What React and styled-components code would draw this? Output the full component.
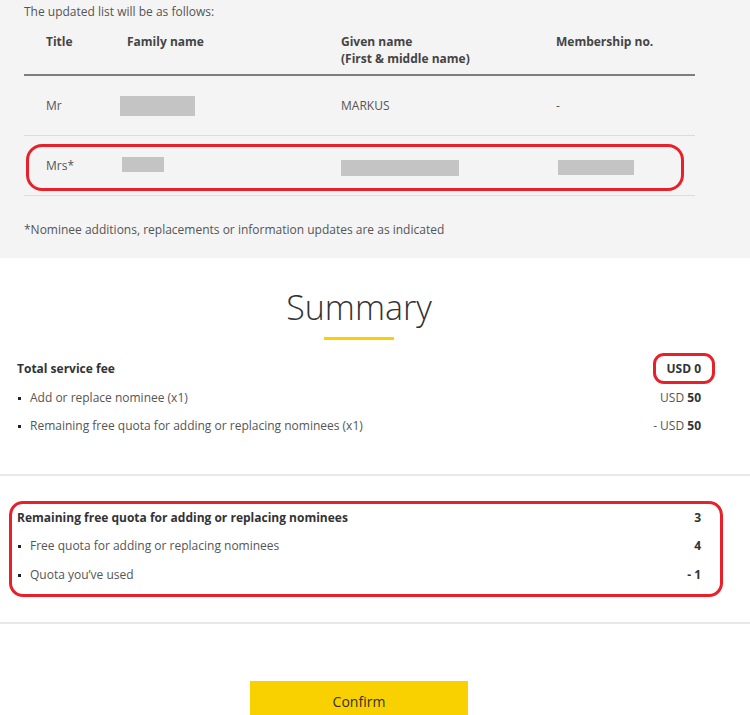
import React from "react";
import styled, { createGlobalStyle } from "styled-components";

const GlobalStyle = createGlobalStyle`
  * { box-sizing: border-box; }
  body {
    margin: 0;
    background: #fff;
    font-family: "Open Sans", "Liberation Sans", Arial, sans-serif;
    font-size: 12px;
    color: #555;
  }
`;

const nominees = [
  { title: "Mr", family: { w: 75, h: 20, dx: -7 }, given: "MARKUS", membership: "-" },
  {
    title: "Mrs*",
    family: { w: 42, h: 15, dx: -5, dy: -2 },
    given: { w: 118, h: 16, dx: 0, dy: 4 },
    membership: { w: 76, h: 15, dx: 2, dy: 3 },
    highlight: true,
  },
];

const Redacted = ({ box }) => (
  <Block style={{ width: box.w, height: box.h, marginLeft: box.dx || 0, marginTop: box.dy || 0 }} />
);

const Cell = ({ value }) => (
  <TableCell>{typeof value === "string" ? value : <Redacted box={value} />}</TableCell>
);

const App = () => {
  return (
    <>
      <GlobalStyle />
      <ListPanel>
        <Intro>The updated list will be as follows:</Intro>
        <Table>
          <HeaderRow>
            <HeaderCell>Title</HeaderCell>
            <HeaderCell>Family name</HeaderCell>
            <HeaderCell>
              Given name
              <br />
              (First &amp; middle name)
            </HeaderCell>
            <HeaderCell>Membership no.</HeaderCell>
          </HeaderRow>
          {nominees.map((n) => (
            <BodyRow key={n.title}>
              <TableCell>{n.title}</TableCell>
              <Cell value={n.family} />
              <Cell value={n.given} />
              <Cell value={n.membership} />
              {n.highlight && <RowMark />}
            </BodyRow>
          ))}
        </Table>
        <Footnote>*Nominee additions, replacements or information updates are as indicated</Footnote>
      </ListPanel>

      <Section>
        <Heading>Summary</Heading>
        <Underline />
        <Group $top={15} $bottom={33}>
          <LineRow $strong>
            <span>Total service fee</span>
            <Marked>
              USD 0
              <ValueMark />
            </Marked>
          </LineRow>
          <LineRow $bullet>
            <span>Add or replace nominee (x1)</span>
            <span>
              USD <b>50</b>
            </span>
          </LineRow>
          <LineRow $bullet>
            <span>Remaining free quota for adding or replacing nominees (x1)</span>
            <span>
              - USD <b>50</b>
            </span>
          </LineRow>
        </Group>
      </Section>

      <Divider />

      <Section $top={28}>
        <Group $bottom={33}>
          <LineRow $strong>
            <span>Remaining free quota for adding or replacing nominees</span>
            <b>3</b>
          </LineRow>
          <LineRow $bullet>
            <span>Free quota for adding or replacing nominees</span>
            <b>4</b>
          </LineRow>
          <LineRow $bullet>
            <span>Quota you&rsquo;ve used</span>
            <b>- 1</b>
          </LineRow>
          <GroupMark />
        </Group>
      </Section>

      <Divider />

      <Section $top={57}>
        <ConfirmButton type="button">Confirm</ConfirmButton>
      </Section>
    </>
  );
};

export default App;

const ListPanel = styled.div`
  background: #f4f4f4;
  padding: 4px 55px 20px 24px;
`;

const Intro = styled.div`
  line-height: 16px;
`;

const Table = styled.div`
  margin-top: 13px;
`;

const rowGrid = `
  display: grid;
  grid-template-columns: 81px 214px 215px 1fr;
  padding-left: 22px;
`;

const HeaderRow = styled.div`
  ${rowGrid}
  padding-bottom: 7px;
  border-bottom: 2px solid #7d7d7d;
`;

const HeaderCell = styled.div`
  font-weight: 700;
  color: #444;
  line-height: 17px;
`;

const BodyRow = styled.div`
  ${rowGrid}
  position: relative;
  height: 60px;
  align-items: center;
  border-bottom: 1px solid #dcdcdc;
`;

const TableCell = styled.div`
  display: flex;
  align-items: center;
  line-height: 16px;
`;

const Block = styled.div`
  background: #c4c4c4;
`;

const RowMark = styled.div`
  position: absolute;
  left: 2px;
  top: 8px;
  width: 658px;
  height: 47px;
  border: 3px solid #e8202a;
  border-radius: 16px;
  pointer-events: none;
`;

const Footnote = styled.div`
  margin-top: 26px;
  line-height: 16px;
`;

const Section = styled.div`
  padding: ${(p) => p.$top ?? 29}px 49px 0 17px;
  display: flex;
  flex-direction: column;
  align-items: center;
`;

const Heading = styled.h1`
  margin: 0;
  font-size: 34px;
  font-weight: 300;
  line-height: 40px;
  color: #333;
`;

const Underline = styled.div`
  width: 70px;
  height: 3px;
  margin-top: 10px;
  background: #fccf00;
`;

const Group = styled.div`
  position: relative;
  align-self: stretch;
  margin-top: ${(p) => p.$top ?? 0}px;
  margin-bottom: ${(p) => p.$bottom ?? 34}px;
`;

const LineRow = styled.div`
  position: relative;
  display: flex;
  justify-content: space-between;
  align-items: center;
  height: 28.5px;
  line-height: 16px;
  padding-left: ${(p) => (p.$bullet ? "13px" : "0")};
  font-weight: ${(p) => (p.$strong ? 700 : 400)};
  color: ${(p) => (p.$strong ? "#333" : "#555")};

  b {
    font-weight: 700;
    color: #333;
  }

  &::before {
    content: "";
    display: ${(p) => (p.$bullet ? "block" : "none")};
    position: absolute;
    left: 1px;
    top: 13px;
    width: 3px;
    height: 3px;
    background: #222;
  }
`;

const Marked = styled.span`
  position: relative;
`;

const ValueMark = styled.span`
  position: absolute;
  left: -13px;
  right: -14px;
  top: -8px;
  bottom: -7px;
  border: 3px solid #e8202a;
  border-radius: 11px;
`;

const GroupMark = styled.div`
  position: absolute;
  left: -8px;
  right: -22px;
  top: -3px;
  bottom: -8px;
  border: 3px solid #e8202a;
  border-radius: 14px;
`;

const Divider = styled.div`
  height: 2px;
  background: #e8e8e8;
`;

const ConfirmButton = styled.button`
  width: 218px;
  height: 40px;
  border: none;
  background: #f9d000;
  font-family: "Open Sans", "Liberation Sans", Arial, sans-serif;
  font-size: 14px;
  color: #333;
  cursor: pointer;
`;
